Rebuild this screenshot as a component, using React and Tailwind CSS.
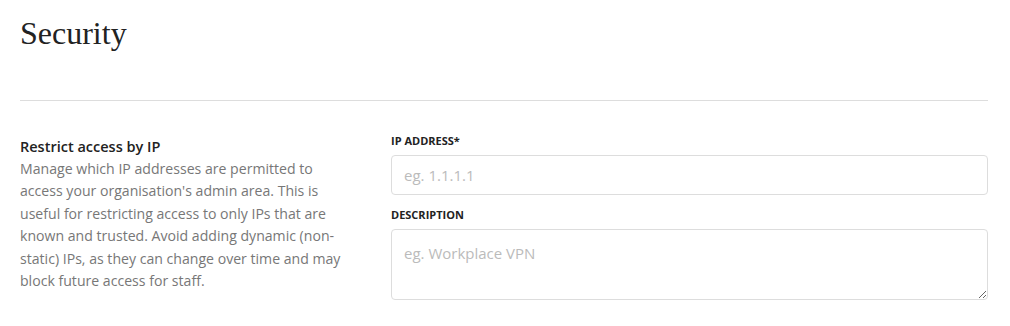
export default function App() {
  return (
    <div className="w-[1010px] h-[326px] bg-white pl-5 pr-[22px] pt-[12px]" style={{ fontFamily: '"Open Sans", sans-serif' }}>
      <h1 className="text-[32px] leading-[42px] text-[#222] font-normal" style={{ fontFamily: '"Liberation Serif", serif' }}>Security</h1>
      <div className="mt-[46px] border-t border-[#ddd]"></div>
      <div className="flex mt-[35px]">
        <div className="w-[330px] shrink-0">
          <div className="text-[14.5px] font-semibold text-[#222] leading-[22px]">Restrict access by IP</div>
          <p className="text-[14.1px] leading-[22.4px] text-[#777]">Manage which IP addresses are permitted to access your organisation's admin area. This is useful for restricting access to only IPs that are known and trusted. Avoid adding dynamic (non-static) IPs, as they can change over time and may block future access for staff.</p>
        </div>
        <div className="ml-[41px] flex-1 flex flex-col">
          <label className="text-[11px] font-bold text-[#222] leading-[14px] mt-[-2px]">IP ADDRESS*</label>
          <input className="mt-[7px] h-[40px] border border-[#ddd] rounded-[4px] px-3 text-[15px] placeholder:text-[#bbb] outline-none" placeholder="eg. 1.1.1.1" />
          <label className="text-[11px] font-bold text-[#222] leading-[14px] mt-[13px]">DESCRIPTION</label>
          <textarea className="mt-[7px] h-[71px] border border-[#ddd] rounded-[4px] px-3 pt-[12px] pb-[8px] text-[15px] placeholder:text-[#bbb] outline-none" placeholder="eg. Workplace VPN" />
        </div>
      </div>
    </div>
  );
}
